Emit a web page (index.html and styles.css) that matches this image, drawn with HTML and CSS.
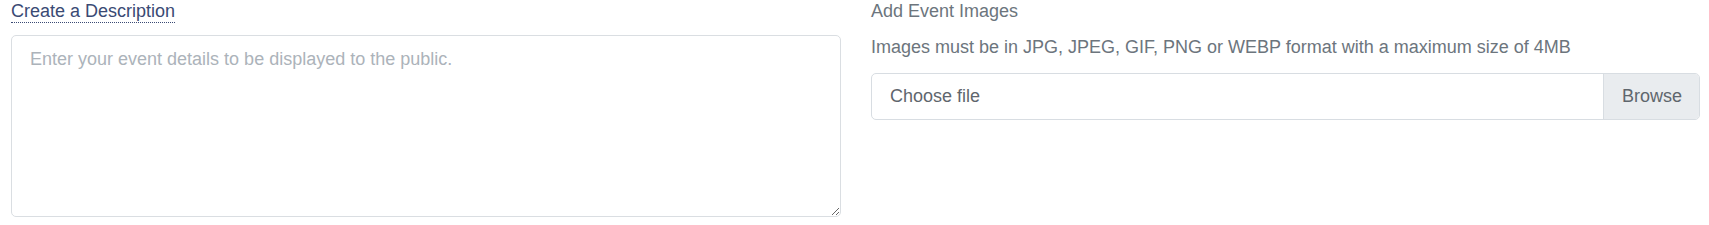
FILE: index.html
```html
<!DOCTYPE html>
<html>
<head>
<meta charset="utf-8">
<link rel="stylesheet" href="styles.css">
</head>
<body>
<div class="row">
  <div class="col">
    <div class="label-line"><span class="label-desc">Create a Description</span></div>
    <textarea class="desc" placeholder="Enter your event details to be displayed to the public."></textarea>
  </div>
  <div class="col">
    <div class="label-line"><span class="label-images">Add Event Images</span></div>
    <p class="help">Images must be in JPG, JPEG, GIF, PNG or WEBP format with a maximum size of 4MB</p>
    <div class="file">
      <span class="file-name">Choose file</span>
      <span class="file-btn">Browse</span>
    </div>
  </div>
</div>
</body>
</html>
```

FILE: styles.css
```css
html, body {
  margin: 0;
  padding: 0;
  background: #ffffff;
}
body {
  font-family: "Liberation Sans", Arial, sans-serif;
  font-size: 18px;
  line-height: 1.5;
  color: #495057;
}
.row {
  display: grid;
  grid-template-columns: 830px 829px;
  column-gap: 30px;
  padding: 0 9px 0 11px;
}
.col {
  display: flex;
  flex-direction: column;
}
.label-line {
  line-height: 23px;
  height: 23px;
}
.label-desc {
  display: inline-block;
  color: #3a4a74;
  border-bottom: 1px dotted #3a4a74;
  line-height: 22px;
}
.label-images {
  color: #6c757d;
}
.desc {
  margin: 12px 0 0 0;
  box-sizing: border-box;
  width: 100%;
  height: 182px;
  padding: 10px 18px;
  font-family: inherit;
  font-size: 18px;
  line-height: 1.5;
  color: #495057;
  border: 1px solid #dadee2;
  border-radius: 5px;
  resize: vertical;
  outline: none;
}
.desc::placeholder {
  color: #acb3ba;
}
.help {
  margin: 11px 0 0 0;
  color: #6c757d;
  line-height: 26px;
}
.file {
  margin-top: 13px;
  display: flex;
  height: 47px;
  box-sizing: border-box;
  border: 1px solid #d8dde2;
  border-radius: 5px;
  overflow: hidden;
}
.file-name {
  flex: 1;
  display: flex;
  align-items: center;
  padding: 0 18px;
  color: #5f666d;
}
.file-btn {
  display: flex;
  align-items: center;
  padding: 0 17px 0 18px;
  background: #e9ecef;
  color: #5f666d;
  border-left: 1px solid #d8dde2;
}
```
